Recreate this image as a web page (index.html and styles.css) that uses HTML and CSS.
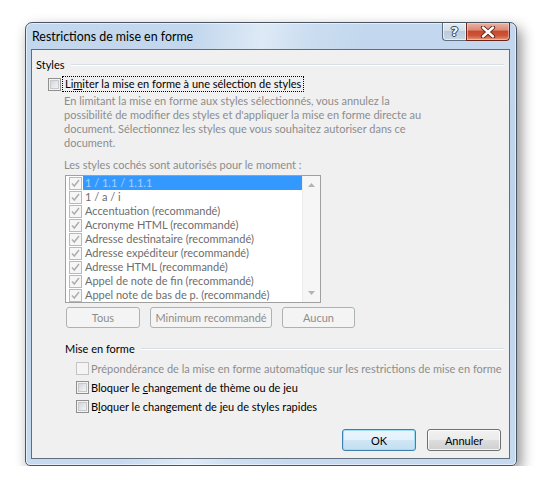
FILE: index.html
```html
<!DOCTYPE html>
<html lang="fr">
<head>
<meta charset="utf-8">
<title>Restrictions de mise en forme</title>
<link rel="stylesheet" href="styles.css">
</head>
<body>
<div class="stage">
  <div class="window">
    <div class="titlebar">
      <span class="title">Restrictions de mise en forme</span>
      <div class="caption-btns">
        <span class="cbtn help"><span class="qmark">?</span></span>
        <span class="cbtn close">
          <svg width="16" height="12" viewBox="0 0 16 12">
            <path d="M3 1.5 L13 10.5 M13 1.5 L3 10.5" stroke="#5a1d12" stroke-width="4.2" stroke-linecap="round"/>
            <path d="M3 1.5 L13 10.5 M13 1.5 L3 10.5" stroke="#ffffff" stroke-width="2.4" stroke-linecap="round"/>
          </svg>
        </span>
      </div>
    </div>
    <div class="client">
      <div class="group-head styles-head"><span>Styles</span><i class="rule"></i></div>
      <div class="main-check">
        <span class="cb"></span>
        <span class="focus">Li<u>m</u>iter la mise en forme à une sélection de styles</span>
      </div>
      <p class="desc">En limitant la mise en forme aux styles sélectionnés, vous annulez la<br>possibilité de modifier des styles et d'appliquer la mise en forme directe au<br>document. Sélectionnez les styles que vous souhaitez autoriser dans ce<br>document.</p>
      <div class="sub-label">Les styles cochés sont autorisés pour le moment :</div>
      <div class="listbox">
        <ul class="items">
          <li class="sel"><span class="lcb"></span><span class="txt">1 / 1.1 / 1.1.1</span></li>
          <li><span class="lcb"></span><span class="txt">1 / a / i</span></li>
          <li><span class="lcb"></span><span class="txt">Accentuation (recommandé)</span></li>
          <li><span class="lcb"></span><span class="txt">Acronyme HTML (recommandé)</span></li>
          <li><span class="lcb"></span><span class="txt">Adresse destinataire (recommandé)</span></li>
          <li><span class="lcb"></span><span class="txt">Adresse expéditeur (recommandé)</span></li>
          <li><span class="lcb"></span><span class="txt">Adresse HTML (recommandé)</span></li>
          <li><span class="lcb"></span><span class="txt">Appel de note de fin (recommandé)</span></li>
          <li><span class="lcb"></span><span class="txt">Appel note de bas de p. (recommandé)</span></li>
        </ul>
        <div class="vscroll">
          <svg width="7" height="4" viewBox="0 0 7 4"><path d="M0 4 L3.5 0 L7 4 Z" fill="#b4b4b4"/></svg>
          <svg width="7" height="4" viewBox="0 0 7 4"><path d="M0 0 L3.5 4 L7 0 Z" fill="#b4b4b4"/></svg>
        </div>
      </div>
      <div class="btn-row">
        <button class="btn w-tous" disabled>Tous</button>
        <button class="btn w-min" disabled>Minimum recommandé</button>
        <button class="btn w-aucun" disabled>Aucun</button>
      </div>
      <div class="group-head format-head"><span>Mise en forme</span><i class="rule"></i></div>
      <div class="opts">
        <div class="opt disabled"><span class="cb"></span><span>Prépondérance de la mise en forme automatique sur les restrictions de mise en forme</span></div>
        <div class="opt"><span class="cb"></span><span>Bloquer le <u>c</u>hangement de thème ou de jeu</span></div>
        <div class="opt"><span class="cb"></span><span>B<u>l</u>oquer le changement de jeu de styles rapides</span></div>
      </div>
      <div class="footer">
        <button class="btn default w-ok">OK</button>
        <button class="btn w-cancel">Annuler</button>
      </div>
    </div>
  </div>
</div>
</body>
</html>
```

FILE: styles.css
```css
* { box-sizing: border-box; }

body {
  margin: 0;
  background: #ffffff;
  font-family: Lato, "Liberation Sans", sans-serif;
  font-size: 11px;
  color: #000000;
}

.stage {
  padding: 22px 0 0 25px;
}

.window {
  width: 492px;
  height: 444px;
  border: 1px solid #4b5561;
  border-radius: 7px 7px 5px 5px;
  padding: 0 6px 6px 5px;
  display: flex;
  flex-direction: column;
  background:
    linear-gradient(100deg, rgba(255,255,255,0) 30%, rgba(255,255,255,.45) 42%, rgba(255,255,255,.15) 50%, rgba(255,255,255,0) 60%),
    linear-gradient(180deg, #c3d8ee 0%, #bcd3eb 40%, #c6daef 100%);
  box-shadow: inset 0 0 0 1px rgba(255,255,255,.55), 4px 6px 14px rgba(0,0,0,.45);
}

.titlebar {
  height: 26px;
  display: flex;
  align-items: center;
}

.title {
  padding-left: 1px;
  font-size: 12.4px;
  color: #000;
}

.caption-btns {
  margin-left: auto;
  align-self: flex-start;
  display: flex;
}

.cbtn {
  height: 18px;
  display: flex;
  align-items: center;
  justify-content: center;
  border: 1px solid #5f6f82;
  border-top: none;
}

.help {
  width: 24px;
  border-right: none;
  border-radius: 0 0 0 4px;
  background: linear-gradient(180deg, #e4ecf4 0%, #d3dfeb 45%, #bccbdc 50%, #c9d7e6 100%);
  box-shadow: inset 0 0 0 1px rgba(255,255,255,.6);
}

.qmark {
  font-family: "DejaVu Sans", sans-serif;
  font-weight: bold;
  font-size: 13px;
  line-height: 1;
  color: #f4f6f8;
  text-shadow: 0 0 1px #3d4650, 0 0 1px #3d4650, 1px 0 0 #3d4650, -1px 0 0 #3d4650, 0 1px 0 #3d4650, 0 -1px 0 #3d4650;
}

.close {
  width: 44px;
  border-color: #6b2417;
  border-radius: 0 0 4px 0;
  background: linear-gradient(180deg, #eab4a6 0%, #dc8a75 40%, #c64a30 50%, #cc5539 75%, #e39b7a 100%);
  box-shadow: inset 0 0 0 1px rgba(255,220,210,.5);
}

.client {
  flex: 1;
  border: 1px solid #5f6d7d;
  background: #f0f0f0;
  display: flex;
  flex-direction: column;
}

.group-head {
  display: flex;
  align-items: center;
  height: 15px;
  line-height: 15px;
  margin-right: 5px;
  white-space: nowrap;
}

.group-head .rule {
  flex: 1;
  height: 2px;
  border-top: 1px solid #d5dfe5;
  border-bottom: 1px solid #ffffff;
  margin-left: 6px;
  margin-top: 1px;
}

.styles-head {
  margin-top: 7px;
  padding-left: 4px;
}

.main-check {
  margin-top: 4px;
  margin-left: 16px;
  height: 16px;
  display: flex;
  align-items: center;
}

.cb {
  width: 13px;
  height: 13px;
  flex: none;
  border: 1px solid #8e8f8f;
  background: linear-gradient(135deg, #c9cdd2 0%, #e6e8eb 55%, #fbfbfb 100%);
  box-shadow: inset 0 0 0 1px #f3f3f3, inset 0 0 0 2px #c6c8cb;
}

.main-check .focus {
  margin-left: 1px;
  height: 16px;
  line-height: 14px;
  padding: 0 2px 0 2px;
  border: 1px dotted #000;
  white-space: nowrap;
}

.desc {
  margin: 2px 0 0 32px;
  line-height: 14px;
  color: #8d8d8d;
  white-space: nowrap;
}

.sub-label {
  margin: 8px 0 0 32px;
  line-height: 14px;
  color: #8d8d8d;
  white-space: nowrap;
}

.listbox {
  margin: 3px 0 0 33px;
  width: 256px;
  height: 128px;
  border: 1px solid #a0a0a0;
  background: #ffffff;
  display: flex;
}

.items {
  list-style: none;
  margin: 0;
  padding: 0;
  flex: 1;
}

.items li {
  height: 14px;
  display: flex;
  align-items: center;
  color: #6d6d6d;
  white-space: nowrap;
}

.lcb {
  width: 13px;
  height: 13px;
  margin-left: 3px;
  flex: none;
  border: 1px solid #b9b9b9;
  background:
    url("data:image/svg+xml;utf8,<svg xmlns='http://www.w3.org/2000/svg' width='11' height='11'><path d='M2 5.5 L4.3 8 L9 2' fill='none' stroke='%23b0b0b0' stroke-width='1.6'/></svg>") center / 11px 11px no-repeat,
    #f6f6f6;
}

.items .txt {
  flex: 1;
  margin-left: 1px;
  padding-left: 2px;
  height: 14px;
  line-height: 14px;
}

.items .sel .txt {
  background: #3399ff;
  color: rgba(255,255,255,.55);
}

.vscroll {
  width: 18px;
  flex: none;
  background: #f6f6f6;
  border-left: 1px solid #ececec;
  display: flex;
  flex-direction: column;
  justify-content: space-between;
  align-items: center;
  padding: 7px 0 7px;
}

.btn-row {
  margin: 4px 0 0 34px;
  display: flex;
  gap: 10px;
}

.btn {
  height: 22px;
  padding: 0;
  font: inherit;
  color: #000;
  white-space: nowrap;
  border: 1px solid #707070;
  border-radius: 3px;
  background: linear-gradient(180deg, #f2f2f2 0%, #ebebeb 48%, #dddddd 52%, #cfcfcf 100%);
  box-shadow: inset 0 0 0 1px rgba(255,255,255,.75);
}

.btn:disabled {
  height: 21px;
  color: #8d8d8d;
  border-color: #adb2b5;
  background: #f4f4f4;
  box-shadow: none;
}

.w-tous { width: 74px; }
.w-min { width: 122px; }
.w-aucun { width: 73px; }

.format-head {
  margin-top: 13px;
  padding-left: 33px;
}

.opts {
  margin: 5px 0 0 44px;
  display: flex;
  flex-direction: column;
  gap: 4px;
}

.opt {
  height: 15px;
  display: flex;
  align-items: center;
  gap: 2px;
  white-space: nowrap;
}

.opt.disabled {
  color: #8d8d8d;
}

.opt.disabled .cb {
  border-color: #c4c4c4;
  background: #f4f4f4;
  box-shadow: none;
}

.footer {
  margin-top: auto;
  margin-bottom: 7px;
  padding-right: 8px;
  display: flex;
  justify-content: flex-end;
  gap: 11px;
}

.btn.default {
  border-color: #3c7fb1;
  box-shadow: inset 0 0 0 1px #9fdcf5;
  background: linear-gradient(180deg, #eaf6fd 0%, #e3f1fa 48%, #cfe6f5 52%, #c3dff1 100%);
}

.w-ok { width: 74px; }
.w-cancel { width: 74px; }
```
